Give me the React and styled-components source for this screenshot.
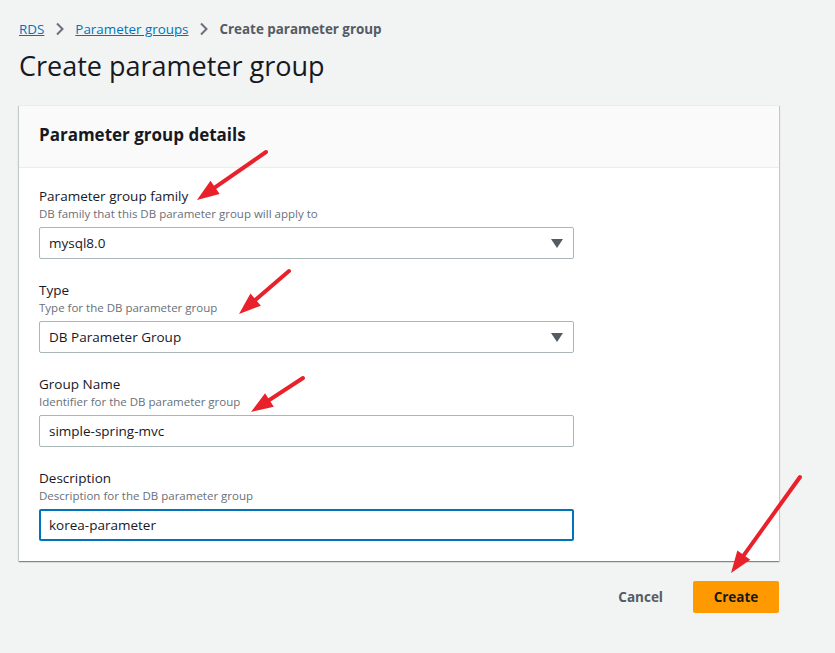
import React from 'react'
import styled, { createGlobalStyle } from 'styled-components'

const GlobalStyle = createGlobalStyle`
  html, body {
    margin: 0;
    padding: 0;
    background: #f2f3f3;
    font-family: "Open Sans", Roboto, Arial, sans-serif;
    color: #16191f;
  }
`

const Page = styled.div`
  position: relative;
  width: 835px;
  height: 653px;
  padding: 19px 56px 0 19px;
  box-sizing: border-box;
`

const Breadcrumbs = styled.nav`
  display: flex;
  align-items: center;
  height: 20px;
  font-size: 13.4px;
  line-height: 20px;
`

const Crumb = styled.a`
  color: #0073bb;
  text-decoration: underline;
  cursor: pointer;
`

const CurrentCrumb = styled.span`
  color: #545b64;
  font-weight: 700;
`

const Sep = styled.span`
  display: flex;
  align-items: center;
  margin: 0 10px 0 11px;
  color: #687078;
`

const Title = styled.h1`
  margin: 7px 0 0;
  font-size: 27px;
  font-weight: 400;
  line-height: 40px;
  color: #16191f;
`

const Panel = styled.section`
  margin-top: 19px;
  background: #fff;
  box-shadow: 0 1px 1px 0 rgba(0, 28, 36, 0.3), 1px 1px 1px 0 rgba(0, 28, 36, 0.15),
    -1px 1px 1px 0 rgba(0, 28, 36, 0.15);
  border-top: 1px solid #eaeded;
`

const PanelHeader = styled.header`
  height: 62px;
  padding: 0 20px 4px;
  box-sizing: border-box;
  display: flex;
  align-items: center;
  background: #fafafa;
  border-bottom: 1px solid #eaeded;
  font-size: 17px;
  font-weight: 700;
`

const PanelBody = styled.div`
  padding: 18px 205px 20px 20px;
  display: flex;
  flex-direction: column;
  gap: 21px;
`

const Field = styled.div`
  display: flex;
  flex-direction: column;
`

const Label = styled.label`
  font-size: 13.5px;
  line-height: 20px;
  height: 20px;
  color: #16191f;
`

const Hint = styled.div`
  font-size: 11.5px;
  line-height: 16px;
  height: 16px;
  color: #687078;
  margin-bottom: 5px;
`

const Box = styled.div`
  position: relative;
  height: 32px;
  box-sizing: border-box;
  display: flex;
  align-items: center;
  padding: 0 ${p => (p.$focused ? '8px' : '9px')};
  border: ${p => (p.$focused ? '2px solid #0073bb' : '1px solid #aab7b8')};
  border-radius: 2px;
  font-size: 13.5px;
  color: #16191f;
  background: #fff;
`

const Caret = styled.span`
  position: absolute;
  right: 10px;
  top: 50%;
  margin-top: -4px;
  width: 0;
  height: 0;
  border-left: 6px solid transparent;
  border-right: 6px solid transparent;
  border-top: 9px solid #545b64;
`

const Actions = styled.div`
  margin-top: 20px;
  display: flex;
  justify-content: flex-end;
  align-items: center;
  gap: 30px;
`

const TextButton = styled.button`
  border: none;
  background: none;
  font-family: inherit;
  font-size: 13.5px;
  font-weight: 700;
  color: #545b64;
  padding: 0;
`

const PrimaryButton = styled.button`
  width: 86px;
  height: 32px;
  border: none;
  border-radius: 2px;
  background: #ff9900;
  font-family: inherit;
  font-size: 13.5px;
  font-weight: 700;
  color: #16191f;
`

const Overlay = styled.svg`
  position: absolute;
  left: 0;
  top: 0;
  pointer-events: none;
`

const Chevron = () => (
  <Sep>
    <svg width="10" height="14" viewBox="0 0 10 14">
      <path d="M2 1.5 L7.5 7 L2 12.5" fill="none" stroke="#687078" strokeWidth="2" />
    </svg>
  </Sep>
)

const Arrow = ({ x1, y1, x2, y2 }) => {
  const dx = x2 - x1
  const dy = y2 - y1
  const len = Math.hypot(dx, dy)
  const ux = dx / len
  const uy = dy / len
  const head = 22
  const wide = 8
  const bx = x2 - ux * head
  const by = y2 - uy * head
  const pts = `${x2},${y2} ${bx - uy * wide},${by + ux * wide} ${bx + uy * wide},${by - ux * wide}`
  return (
    <g>
      <line x1={x1} y1={y1} x2={bx + ux * 4} y2={by + uy * 4} stroke="#e8212a" strokeWidth="4" strokeLinecap="round" />
      <polygon points={pts} fill="#e8212a" />
    </g>
  )
}

const fields = [
  { label: 'Parameter group family', hint: 'DB family that this DB parameter group will apply to', value: 'mysql8.0', select: true },
  { label: 'Type', hint: 'Type for the DB parameter group', value: 'DB Parameter Group', select: true },
  { label: 'Group Name', hint: 'Identifier for the DB parameter group', value: 'simple-spring-mvc' },
  { label: 'Description', hint: 'Description for the DB parameter group', value: 'korea-parameter', focused: true },
]

export default function App() {
  return (
    <>
      <GlobalStyle />
      <Page>
        <Breadcrumbs>
          <Crumb>RDS</Crumb>
          <Chevron />
          <Crumb>Parameter groups</Crumb>
          <Chevron />
          <CurrentCrumb>Create parameter group</CurrentCrumb>
        </Breadcrumbs>
        <Title>Create parameter group</Title>

        <Panel>
          <PanelHeader>Parameter group details</PanelHeader>
          <PanelBody>
            {fields.map(f => (
              <Field key={f.label}>
                <Label>{f.label}</Label>
                <Hint>{f.hint}</Hint>
                <Box $focused={f.focused}>
                  {f.value}
                  {f.select && <Caret />}
                </Box>
              </Field>
            ))}
          </PanelBody>
        </Panel>

        <Actions>
          <TextButton>Cancel</TextButton>
          <PrimaryButton>Create</PrimaryButton>
        </Actions>

        <Overlay width="835" height="653">
          <Arrow x1={266} y1={152} x2={197} y2={200} />
          <Arrow x1={289} y1={271} x2={239} y2={314} />
          <Arrow x1={303} y1={378} x2={251} y2={412} />
          <Arrow x1={800} y1={477} x2={731} y2={573} />
        </Overlay>
      </Page>
    </>
  )
}
